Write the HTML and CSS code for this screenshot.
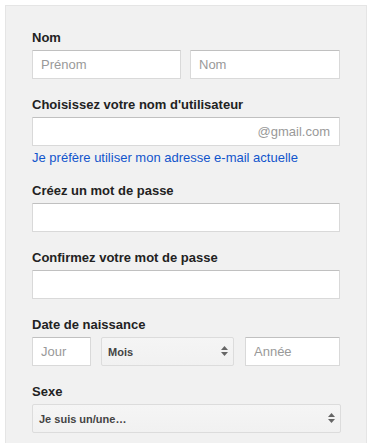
FILE: index.html
```html
<!DOCTYPE html>
<html lang="fr">
<head>
<meta charset="utf-8">
<title>Créer un compte</title>
<link rel="stylesheet" href="styles.css">
</head>
<body>
<div class="panel">
  <div class="field">
    <label class="label">Nom</label>
    <div class="row">
      <input class="input first" type="text" placeholder="Prénom">
      <input class="input last" type="text" placeholder="Nom">
    </div>
  </div>

  <div class="field">
    <label class="label">Choisissez votre nom d'utilisateur</label>
    <div class="input user">
      <input class="bare" type="text">
      <span class="suffix">@gmail.com</span>
    </div>
    <a class="link" href="#">Je préfère utiliser mon adresse e-mail actuelle</a>
  </div>

  <div class="field">
    <label class="label">Créez un mot de passe</label>
    <input class="input full" type="password">
  </div>

  <div class="field">
    <label class="label">Confirmez votre mot de passe</label>
    <input class="input full" type="password">
  </div>

  <div class="field">
    <label class="label">Date de naissance</label>
    <div class="row">
      <input class="input day" type="text" placeholder="Jour">
      <div class="select month">
        <span>Mois</span>
        <svg class="arrows" width="7" height="11" viewBox="0 0 7 11"><path d="M3.5 0 L7 4 L0 4 Z M0 6 L7 6 L3.5 10 Z" fill="#666"/></svg>
      </div>
      <input class="input year" type="text" placeholder="Année">
    </div>
  </div>

  <div class="field">
    <label class="label">Sexe</label>
    <div class="select gender">
      <span>Je suis un/une…</span>
      <svg class="arrows" width="7" height="11" viewBox="0 0 7 11"><path d="M3.5 0 L7 4 L0 4 Z M0 6 L7 6 L3.5 10 Z" fill="#666"/></svg>
    </div>
  </div>
</div>
</body>
</html>
```

FILE: styles.css
```css
* { box-sizing: border-box; }

body {
  margin: 0;
  background: #ffffff;
  font-family: "Liberation Sans", Arial, sans-serif;
  font-size: 13px;
  color: #222222;
}

.panel {
  margin: 5px 0 0 5px;
  width: 362px;
  padding: 24px 26px 40px;
  background: #f1f1f1;
  border: 1px solid #e5e5e5;
}

.field {
  margin-bottom: 18px;
}

.label {
  display: block;
  font-weight: bold;
  font-size: 13px;
  line-height: 16px;
  margin-bottom: 4px;
  color: #222222;
}

.row {
  display: flex;
}

.input {
  display: block;
  height: 29px;
  margin: 0;
  padding: 0 8px;
  background: #ffffff;
  border: 1px solid #d9d9d9;
  border-top-color: #c0c0c0;
  border-radius: 1px;
  font-family: "Liberation Sans", Arial, sans-serif;
  font-size: 13px;
  color: #222222;
  outline: none;
}

.input::placeholder {
  color: #999999;
}

.first { width: 149px; }
.last { width: 150px; margin-left: 9px; }
.full { width: 308px; }

.user {
  width: 308px;
  display: flex;
  align-items: center;
  padding-right: 9px;
}

.bare {
  flex: 1;
  min-width: 0;
  border: 0;
  background: transparent;
  outline: none;
  font-family: inherit;
  font-size: 13px;
  padding: 0;
}

.suffix {
  color: #999999;
  font-size: 13px;
}

.link {
  display: block;
  margin-top: 4px;
  line-height: 16px;
  color: #1155cc;
  text-decoration: none;
  margin-bottom: -1px;
}

.day { width: 59px; }
.year { width: 95px; margin-left: 11px; }

.select {
  height: 29px;
  display: flex;
  align-items: center;
  justify-content: space-between;
  padding: 0 5px 0 6px;
  background: linear-gradient(#f5f5f5, #f1f1f1);
  border: 1px solid #dcdcdc;
  border-radius: 2px;
  font-size: 11px;
  font-weight: bold;
  color: #444444;
}

.month {
  width: 133px;
  margin-left: 10px;
}

.gender {
  width: 309px;
}

.arrows {
  display: block;
}
```
